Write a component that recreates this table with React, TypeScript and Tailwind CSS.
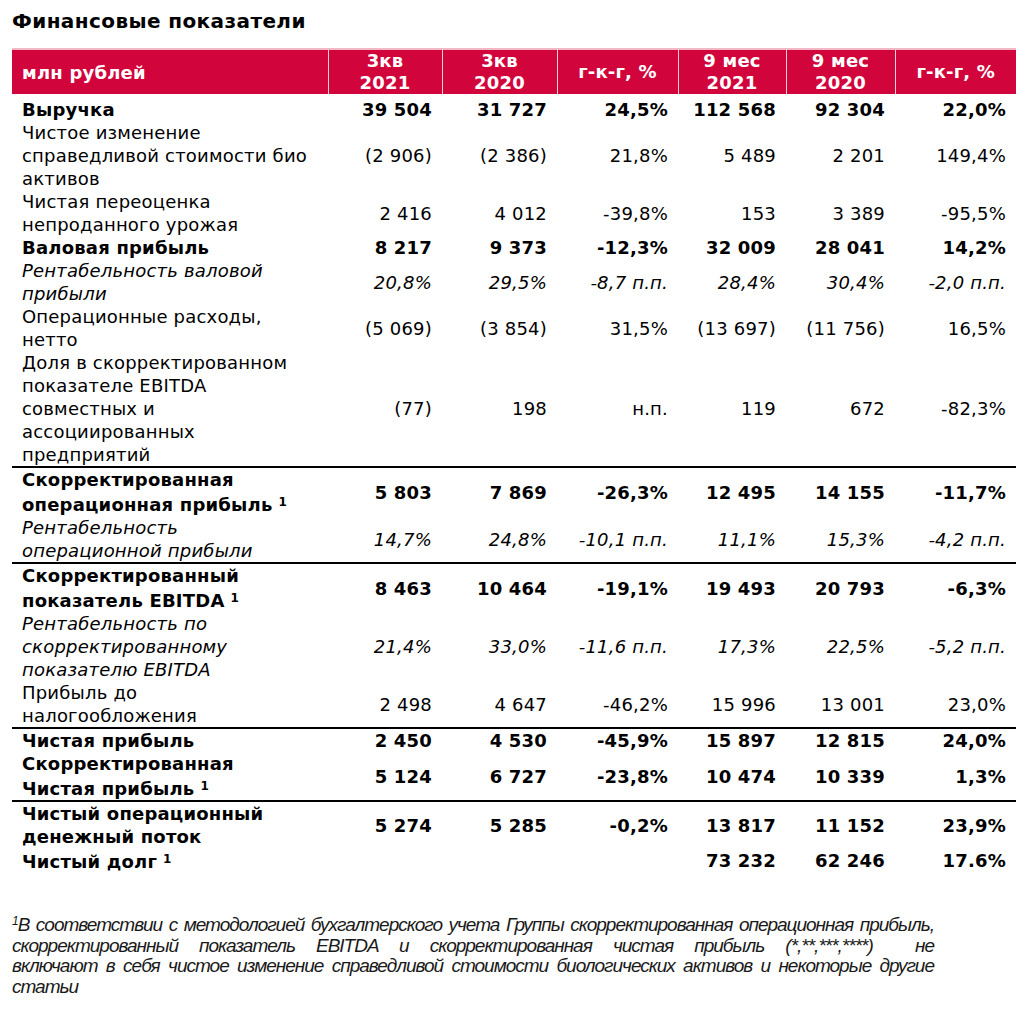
import React from "react";

type Row = {
  label: React.ReactNode;
  values: string[];
  kind?: "bold" | "italic" | "normal";
  lineAfter?: boolean;
};

const Sup = () => <span className="text-[12px] align-[5px] ml-[6px]">1</span>;

const ROWS: Row[] = [
  { label: "Выручка", values: ["39 504", "31 727", "24,5%", "112 568", "92 304", "22,0%"], kind: "bold" },
  {
    label: (
      <>
        Чистое изменение
        <br />
        справедливой стоимости био
        <br />
        активов
      </>
    ),
    values: ["(2 906)", "(2 386)", "21,8%", "5 489", "2 201", "149,4%"],
  },
  {
    label: (
      <>
        Чистая переоценка
        <br />
        непроданного урожая
      </>
    ),
    values: ["2 416", "4 012", "-39,8%", "153", "3 389", "-95,5%"],
  },
  { label: "Валовая прибыль", values: ["8 217", "9 373", "-12,3%", "32 009", "28 041", "14,2%"], kind: "bold" },
  {
    label: (
      <>
        Рентабельность валовой
        <br />
        прибыли
      </>
    ),
    values: ["20,8%", "29,5%", "-8,7 п.п.", "28,4%", "30,4%", "-2,0 п.п."],
    kind: "italic",
  },
  {
    label: (
      <>
        Операционные расходы,
        <br />
        нетто
      </>
    ),
    values: ["(5 069)", "(3 854)", "31,5%", "(13 697)", "(11 756)", "16,5%"],
  },
  {
    label: (
      <>
        Доля в скорректированном
        <br />
        показателе EBITDA
        <br />
        совместных и
        <br />
        ассоциированных
        <br />
        предприятий
      </>
    ),
    values: ["(77)", "198", "н.п.", "119", "672", "-82,3%"],
    lineAfter: true,
  },
  {
    label: (
      <>
        Скорректированная
        <br />
        операционная прибыль
        <Sup />
      </>
    ),
    values: ["5 803", "7 869", "-26,3%", "12 495", "14 155", "-11,7%"],
    kind: "bold",
  },
  {
    label: (
      <>
        Рентабельность
        <br />
        операционной прибыли
      </>
    ),
    values: ["14,7%", "24,8%", "-10,1 п.п.", "11,1%", "15,3%", "-4,2 п.п."],
    kind: "italic",
    lineAfter: true,
  },
  {
    label: (
      <>
        Скорректированный
        <br />
        показатель EBITDA
        <Sup />
      </>
    ),
    values: ["8 463", "10 464", "-19,1%", "19 493", "20 793", "-6,3%"],
    kind: "bold",
  },
  {
    label: (
      <>
        Рентабельность по
        <br />
        скорректированному
        <br />
        показателю EBITDA
      </>
    ),
    values: ["21,4%", "33,0%", "-11,6 п.п.", "17,3%", "22,5%", "-5,2 п.п."],
    kind: "italic",
  },
  {
    label: (
      <>
        Прибыль до
        <br />
        налогообложения
      </>
    ),
    values: ["2 498", "4 647", "-46,2%", "15 996", "13 001", "23,0%"],
    lineAfter: true,
  },
  { label: "Чистая прибыль", values: ["2 450", "4 530", "-45,9%", "15 897", "12 815", "24,0%"], kind: "bold" },
  {
    label: (
      <>
        Скорректированная
        <br />
        Чистая прибыль
        <Sup />
      </>
    ),
    values: ["5 124", "6 727", "-23,8%", "10 474", "10 339", "1,3%"],
    kind: "bold",
    lineAfter: true,
  },
  {
    label: (
      <>
        Чистый операционный
        <br />
        денежный поток
      </>
    ),
    values: ["5 274", "5 285", "-0,2%", "13 817", "11 152", "23,9%"],
    kind: "bold",
  },
  {
    label: (
      <>
        Чистый долг
        <Sup />
      </>
    ),
    values: ["", "", "", "73 232", "62 246", "17.6%"],
    kind: "bold",
  },
];

const HEADS = [
  ["3кв", "2021"],
  ["3кв", "2020"],
  ["г-к-г, %"],
  ["9 мес", "2021"],
  ["9 мес", "2020"],
  ["г-к-г, %"],
];

const NOTE = [
  "В соответствии с методологией бухгалтерского учета Группы скорректированная операционная прибыль,",
  "скорректированный показатель EBITDA и скорректированная чистая прибыль (*,**,***,****)  не",
  "включают в себя чистое изменение справедливой стоимости биологических активов и некоторые другие",
];

export default function App() {
  return (
    <div className="w-[1025px] h-[1009px] bg-white text-black font-['DejaVu_Sans',Verdana,sans-serif] overflow-hidden">
      <div className="pt-[8px] pl-[12px]">
        <h1 className="text-[20px] leading-[26px] font-bold tracking-[0.4px]">Финансовые показатели</h1>

        {/* Table */}
        <table className="mt-[14px] w-[1004px] table-fixed border-collapse text-[18px] leading-[23px] tracking-[0.2px]">
          <colgroup>
            <col className="w-[316px]" />
            <col className="w-[114px]" />
            <col className="w-[115px]" />
            <col className="w-[121px]" />
            <col className="w-[108px]" />
            <col className="w-[109px]" />
            <col className="w-[121px]" />
          </colgroup>
          <thead>
            <tr className="bg-[#d2043c] text-white font-bold h-[45px] border-t-2 border-[#f2b8c6]">
              <th className="text-left pl-[10px] font-bold">млн рублей</th>
              {HEADS.map((h, i) => (
                <th key={i} className="text-center font-bold leading-[22px] border-l border-white/80">
                  {h.map((l, j) => (
                    <div key={j}>{l}</div>
                  ))}
                </th>
              ))}
            </tr>
          </thead>
          <tbody>
            {ROWS.map((r, i) => {
              const style =
                r.kind === "bold" ? "font-bold" : r.kind === "italic" ? "italic" : "";
              return (
                <tr key={i} className={r.lineAfter ? "border-b-2 border-black" : ""}>
                  <td className={`pl-[10px] align-middle whitespace-nowrap ${style} ${i === 0 ? "pt-[4px]" : ""}`}>
                    {r.label}
                  </td>
                  {r.values.map((v, j) => (
                    <td
                      key={j}
                      className={`text-right pr-[10px] whitespace-nowrap ${style} ${i === 0 ? "pt-[4px]" : ""}`}
                    >
                      {v}
                    </td>
                  ))}
                </tr>
              );
            })}
          </tbody>
        </table>

        {/* Footnote */}
        <div className="mt-[38px] w-[922px] text-[19px] leading-[20.5px] italic text-[#1a1a1a] font-['Liberation_Sans',sans-serif] tracking-[-1px]">
          {NOTE.map((line, i) => (
            <div key={i} className="whitespace-pre text-justify [text-align-last:justify]">
              {i === 0 && <span className="text-[12px] align-[6px]">1</span>}
              {line}
            </div>
          ))}
          <div>статьи</div>
        </div>
      </div>
    </div>
  );
}
